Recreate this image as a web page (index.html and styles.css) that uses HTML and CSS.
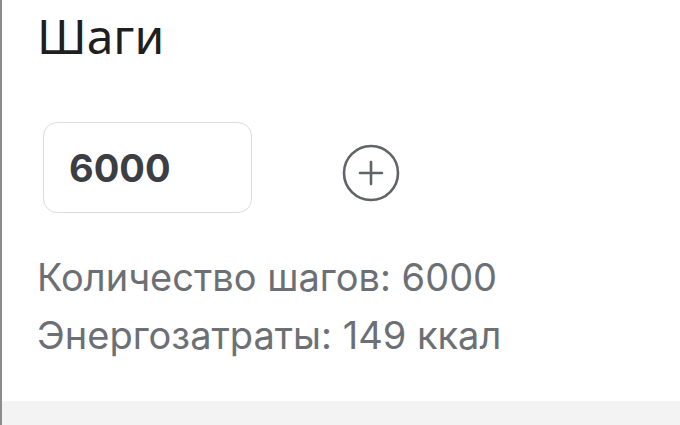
FILE: index.html
```html
<!DOCTYPE html>
<html lang="ru">
<head>
<meta charset="UTF-8">
<title>Шаги</title>
<link rel="stylesheet" href="styles.css">
</head>
<body>

<div class="screen">
  <div class="card">
    <h1>Шаги</h1>
    <div class="entry">
      <div class="steps-input">6000</div>
      <button class="add-btn" aria-label="Добавить">
        <svg width="58" height="58" viewBox="0 0 58 58">
          <circle cx="29" cy="29" r="27" fill="none" stroke="#606368" stroke-width="2.6"/>
          <path d="M29 18v22M18 29h22" stroke="#606368" stroke-width="2.6" stroke-linecap="round"/>
        </svg>
      </button>
    </div>
    <div class="stats">
      <div class="stat">Количество шагов: 6000</div>
      <div class="stat">Энергозатраты: 149 ккал</div>
    </div>
  </div>
  <div class="bottom"></div>
</div>

</body>
</html>
```

FILE: styles.css
```css
body {
  margin: 0;
  background-color: #fff;
  font-family: "Noto Sans", Roboto, sans-serif;
}
.screen {
  height: 425px;
  display: flex;
  flex-direction: column;
  border-left: 2px solid #8c8c8c;
  box-sizing: border-box;
}
.card {
  flex: 1;
  padding: 6px 0 0 35px;
}
h1 {
  margin: 0;
  font-size: 48px;
  font-weight: 400;
  color: #1f1f1f;
  line-height: 60px;
}
.entry {
  display: flex;
  align-items: center;
  gap: 90px;
  margin-top: 56px;
  margin-left: 6px;
}
.steps-input {
  width: 182px;
  height: 89px;
  border: 1.5px solid #dcdcdc;
  border-radius: 14px;
  padding-left: 25px;
  display: flex;
  align-items: center;
  font-family: Inter, "Noto Sans", sans-serif;
  font-size: 38px;
  font-weight: 700;
  color: #3b3e43;
}
.add-btn {
  border: none;
  background: none;
  padding: 0;
  margin-top: 10px;
  display: flex;
}
.stats {
  margin-top: 35px;
}
.stat {
  font-family: Inter, "Noto Sans", sans-serif;
  font-size: 38px;
  color: #6c7075;
  line-height: 58px;
}
.bottom {
  height: 24px;
  background-color: #f3f3f3;
}
```
